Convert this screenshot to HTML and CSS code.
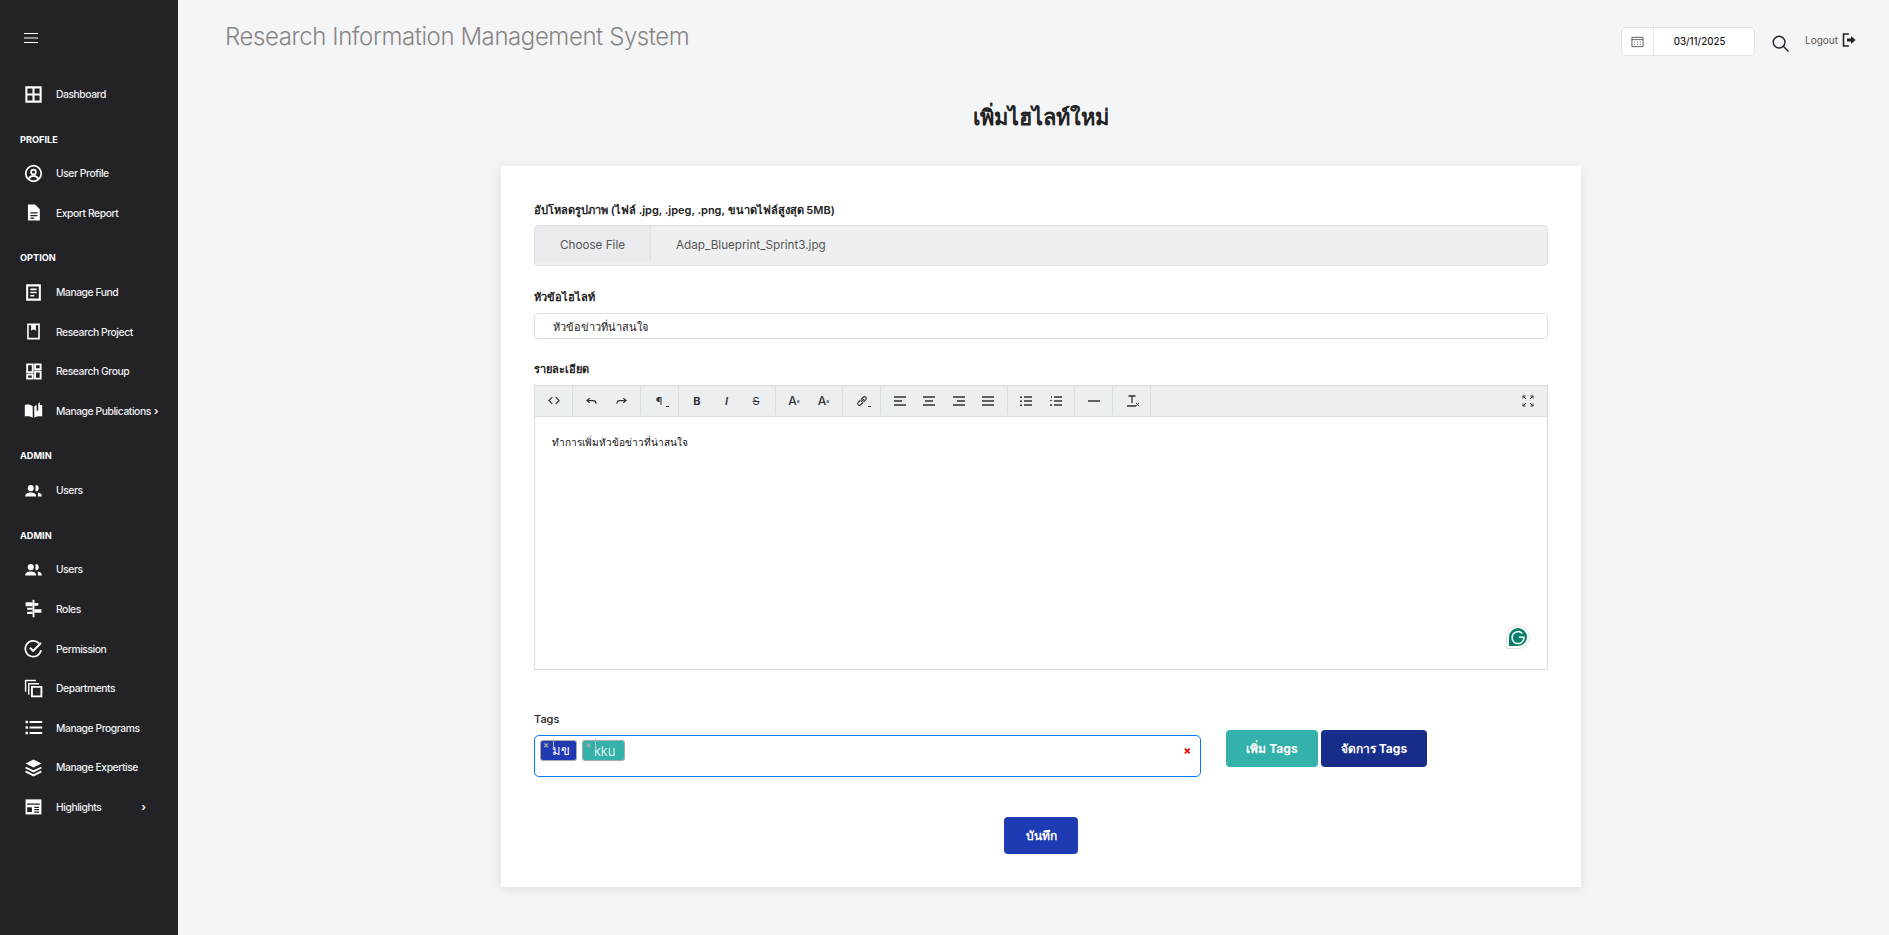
FILE: index.html
```html
<!DOCTYPE html>
<html lang="en">
<head>
    <meta charset="UTF-8">
    <meta name="viewport" content="width=device-width, initial-scale=1.0">
    <title>Research Information Management System</title>
    <link rel="stylesheet" href="styles.css">
</head>
<body>
    <aside class="sidebar">
        <div class="side-top">
            <svg class="burger" viewBox="0 0 14 12" width="14" height="12"><path d="M0 1.500h14M0 6h14M0 10.500h14" stroke="#fff" stroke-width="1.200"/></svg>
        </div>
        <a class="nav-item"><svg class="nav-icon" viewBox="0 0 24 24"><path d="M3 3h18v18H3zM12 3v18M3 12h18" fill="none" stroke="#fff" stroke-width="2.600"/></svg>Dashboard</a>
        <div class="nav-label">PROFILE</div>
        <a class="nav-item"><svg class="nav-icon" viewBox="0 0 24 24"><g fill="none" stroke="#fff" stroke-width="2.200"><circle cx="12" cy="12" r="9.800"/><circle cx="12" cy="10" r="3"/><path d="M6 19c1-3 3.500-4 6-4s5 1 6 4"/></g></svg>User Profile</a>
        <a class="nav-item"><svg class="nav-icon" viewBox="0 0 24 24"><path d="M5 2h9l6 6v14H5z" fill="#fff"/><path d="M8 12.500h9M8 16h9M8 19h5" stroke="#222227" stroke-width="1.600"/></svg>Export Report</a>
        <div class="nav-label">OPTION</div>
        <a class="nav-item"><svg class="nav-icon" viewBox="0 0 24 24"><path d="M4 3h16v18H4z" fill="none" stroke="#fff" stroke-width="2.600"/><path d="M8 8h8M8 12h8M8 16h5" stroke="#fff" stroke-width="2"/></svg>Manage Fund</a>
        <a class="nav-item"><svg class="nav-icon" viewBox="0 0 24 24"><path d="M5 3h14v18H5z" fill="none" stroke="#fff" stroke-width="2"/><path d="M9 3h6v8l-3-2-3 2z" fill="#fff"/></svg>Research Project</a>
        <a class="nav-item"><svg class="nav-icon" viewBox="0 0 24 24"><path d="M4 3h7v10H4zM14 3h7v6h-7zM4 16h7v5H4zM14 12h7v9h-7z" fill="none" stroke="#fff" stroke-width="2.400"/></svg>Research Group</a>
        <a class="nav-item"><svg class="nav-icon" viewBox="0 0 24 24"><path d="M1 5c4-1 7-.5 10 1.500V21c-3-1.500-6-2-10-1.500zM13 6.500c1-.7 2-1.200 3-1.500v8l2-1.500 0-8.500 2-1.500V5l3 0v14.500c-4-.5-7 0-10 1.500z" fill="#fff"/></svg>Manage Publications<span class="chev near">›</span></a>
        <div class="nav-label">ADMIN</div>
        <a class="nav-item"><svg class="nav-icon" viewBox="0 0 24 24"><use href="#ico-users"/></svg>Users</a>
        <div class="nav-label">ADMIN</div>
        <a class="nav-item"><svg class="nav-icon" viewBox="0 0 24 24"><use href="#ico-users"/></svg>Users</a>
        <a class="nav-item"><svg class="nav-icon" viewBox="0 0 24 24"><path d="M12 1v22" stroke="#fff" stroke-width="2.400"/><path d="M2 4h9v5H2zM4 11h7v2.500H4zM13 5h5v3.500h-5zM13 13h9v4.500h-9zM4 16h7v3H4z" fill="#fff"/></svg>Roles</a>
        <a class="nav-item"><svg class="nav-icon" viewBox="0 0 24 24"><path d="M19 5.500A10 10 0 1 0 21.500 14" fill="none" stroke="#fff" stroke-width="2.200"/><path d="M7.500 11l4 4 10-10" fill="none" stroke="#fff" stroke-width="2.400"/></svg>Permission</a>
        <a class="nav-item"><svg class="nav-icon" viewBox="0 0 24 24"><path d="M2 16V2h13M6 20V6h13" fill="none" stroke="#fff" stroke-width="1.800"/><path d="M10 10h12v12H10z" fill="none" stroke="#fff" stroke-width="2.400"/></svg>Departments</a>
        <a class="nav-item"><svg class="nav-icon" viewBox="0 0 24 24"><path d="M7 5h16M7 12h16M7 19h16" stroke="#fff" stroke-width="2.400"/><path d="M2 3.500h3v3H2zM2 10.500h3v3H2zM2 17.500h3v3H2z" fill="#fff"/></svg>Manage Programs</a>
        <a class="nav-item"><svg class="nav-icon" viewBox="0 0 24 24"><path d="M12 2l10 5-10 5L2 7z" fill="#fff"/><path d="M2 12l10 5 10-5M2 17l10 5 10-5" fill="none" stroke="#fff" stroke-width="2.400"/></svg>Manage Expertise</a>
        <a class="nav-item"><svg class="nav-icon" viewBox="0 0 24 24"><path d="M2 3h20v19H2z" fill="#fff"/><path d="M4 9h16M13 13h6M13 16h6M13 19h6" stroke="#222227" stroke-width="1.500"/><path d="M4 13h6v6H4z" fill="#222227"/></svg>Highlights<span class="chev far">›</span></a>
    </aside>

    <svg class="defs" width="0" height="0"><symbol id="ico-users" viewBox="0 0 24 24"><circle cx="8.500" cy="9" r="3.800" fill="#fff"/><path d="M14.500 5a3.800 3.800 0 0 1 0 8z" fill="#fff"/><path d="M1.500 19.500c0-3.500 3-5 7-5s7 1.500 7 5z" fill="#fff"/><path d="M17.500 14.500c3 .3 5 2 5 5h-5z" fill="#fff"/></symbol></svg>

    <main class="content">
        <header class="topbar">
            <div class="app-title">Research Information Management System</div>
            <div class="top-tools">
                <div class="date-box">
                    <span class="date-ico"><svg viewBox="0 0 14 14" width="13" height="13"><path d="M1 2.500h12v10H1zM1 5h12" fill="none" stroke="#555" stroke-width="1"/><path d="M3.500 7h1v1h-1zM6.500 7h1v1h-1zM9.500 7h1v1h-1zM3.500 9.500h1v1h-1zM6.500 9.500h1v1h-1zM9.500 9.500h1v1h-1z" fill="#555"/></svg></span>
                    <span class="date-val">03/11/2025</span>
                </div>
                <svg class="search-ico" viewBox="0 0 18 18" width="17" height="17"><circle cx="7.500" cy="7.500" r="6.200" fill="none" stroke="#1b2430" stroke-width="1.500"/><path d="M12 12l5.500 5.500" stroke="#1b2430" stroke-width="1.500"/></svg>
                <a class="logout">Logout
                    <svg viewBox="0 0 14 14" width="14" height="14"><path d="M7 1H1.500v12H7" fill="none" stroke="#222" stroke-width="1.600"/><path d="M5 5.500h4V3l4.500 4L9 11V8.500H5z" fill="#222"/></svg>
                </a>
            </div>
        </header>

        <h1 class="page-title">เพิ่มไฮไลท์ใหม่</h1>

        <form class="card">
            <label class="field-label">อัปโหลดรูปภาพ (ไฟล์ .jpg, .jpeg, .png, ขนาดไฟล์สูงสุด 5MB)</label>
            <div class="file-input">
                <span class="file-btn">Choose File</span>
                <span class="file-name">Adap_Blueprint_Sprint3.jpg</span>
            </div>

            <label class="field-label">หัวข้อไฮไลท์</label>
            <input class="text-input" type="text" value="หัวข้อข่าวที่น่าสนใจ">

            <label class="field-label">รายละเอียด</label>
            <div class="editor">
                <div class="toolbar">
                    <div class="tool-group">
                        <span class="tool"><svg viewBox="0 0 14 10" width="12" height="9"><path d="M5 1L1 5l4 4M9 1l4 4-4 4" class="ln"/></svg></span>
                    </div>
                    <div class="tool-group">
                        <span class="tool"><svg viewBox="0 0 12 8" width="11" height="8"><path d="M4 1L1 3.500 4 6M1 3.500h7c2 0 3 1 3 3.500" class="ln"/></svg></span>
                        <span class="tool"><svg viewBox="0 0 12 8" width="11" height="8"><path d="M8 1l3 2.500L8 6M11 3.500H4c-2 0-3 1-3 3.500" class="ln"/></svg></span>
                    </div>
                    <div class="tool-group">
                        <span class="tool">¶<i class="caret"></i></span>
                    </div>
                    <div class="tool-group">
                        <span class="tool bold">B</span>
                        <span class="tool ital">I</span>
                        <span class="tool strike">S</span>
                    </div>
                    <div class="tool-group">
                        <span class="tool big">A<sup>a</sup></span>
                        <span class="tool big">A<sub>a</sub></span>
                    </div>
                    <div class="tool-group">
                        <span class="tool"><svg viewBox="0 0 12 12" width="12" height="12"><path d="M5 7l3-3M4.500 5L2 7.500a1.800 1.800 0 0 0 2.500 2.500L7 7.500M5 4.500L7.500 2A1.800 1.800 0 0 1 10 4.500L7.500 7" fill="none" stroke="#333" stroke-width="1.100"/></svg><i class="caret"></i></span>
                    </div>
                    <div class="tool-group">
                        <span class="tool"><svg viewBox="0 0 12 10" width="12" height="10"><path d="M0 1h12M0 5h8M0 9h12" class="ln"/></svg></span>
                        <span class="tool"><svg viewBox="0 0 12 10" width="12" height="10"><path d="M0 1h12M2 5h8M0 9h12" class="ln"/></svg></span>
                        <span class="tool"><svg viewBox="0 0 12 10" width="12" height="10"><path d="M0 1h12M4 5h8M0 9h12" class="ln"/></svg></span>
                        <span class="tool"><svg viewBox="0 0 12 10" width="12" height="10"><path d="M0 1h12M0 5h12M0 9h12" class="ln"/></svg></span>
                    </div>
                    <div class="tool-group">
                        <span class="tool"><svg viewBox="0 0 12 10" width="12" height="10"><path d="M4 1h8M4 5h8M4 9h8" class="ln"/><path d="M0 .5h2v1.500H0zM0 4.500h2v1.500H0zM0 8.500h2v1.500H0z" fill="#333"/></svg></span>
                        <span class="tool"><svg viewBox="0 0 12 10" width="12" height="10"><path d="M4 1h8M4 5h8M4 9h8" class="ln"/><path d="M1 0h1v2H1zM0 4h2v1H0zM0 8h2v2H0z" fill="#555"/></svg></span>
                    </div>
                    <div class="tool-group">
                        <span class="tool"><svg viewBox="0 0 12 4" width="12" height="4"><path d="M0 2h12" stroke="#333" stroke-width="1.500"/></svg></span>
                    </div>
                    <div class="tool-group">
                        <span class="tool tx"><svg viewBox="0 0 12 12" width="12" height="12"><path d="M1.500 1h7M5 1v7M0 11h9" class="ln"/><path d="M9 8l3 3M12 8l-3 3" stroke="#333" stroke-width="1"/></svg></span>
                    </div>
                    <span class="tool full"><svg viewBox="0 0 12 12" width="12" height="12"><path d="M1 1l3 3M11 1L8 4M1 11l3-3M11 11L8 8M1 1h2.500M1 1v2.500M11 1H8.500M11 1v2.500M1 11h2.500M1 11V8.500M11 11H8.500M11 11V8.500" stroke="#333" stroke-width="1" fill="none"/></svg></span>
                </div>
                <div class="editor-body">
                    <p>ทำการเพิ่มหัวข้อข่าวที่น่าสนใจ</p>
                    <span class="grammarly"><svg viewBox="0 0 24 24" width="24" height="24"><path d="M12 .5A11.500 11.500 0 1 1 12 23.500H.5V12A11.500 11.500 0 0 1 12 .5z" fill="#fff" stroke="#dfe3e6"/><path d="M12 3a9 9 0 1 1 0 18H3v-9a9 9 0 0 1 9-9z" fill="#0b7f6c"/><path d="M16.300 8.400A6 6 0 1 0 18 12.300h-5" fill="none" stroke="#fff" stroke-width="1.500"/></svg></span>
                </div>
            </div>

            <label class="field-label tags-label">Tags</label>
            <div class="tags-row">
                <div class="tag-box">
                    <span class="chip chip-blue"><i class="chip-x">×</i>มข</span>
                    <span class="chip chip-teal"><i class="chip-x">×</i>kku</span>
                    <span class="tag-clear">×</span>
                </div>
                <div class="tag-actions">
                    <button type="button" class="btn btn-teal">เพิ่ม Tags</button>
                    <button type="button" class="btn btn-navy">จัดการ Tags</button>
                </div>
            </div>

            <div class="form-foot">
                <button type="button" class="btn btn-save">บันทึก</button>
            </div>
        </form>
    </main>
</body>
</html>
```

FILE: styles.css
```css
* {
    box-sizing: border-box;
}

body {
    font-family: Inter, "Noto Sans", "Noto Sans CJK SC", sans-serif;
    background-color: #f4f5f7;
    margin: 0;
    padding: 0;
    display: flex;
    height: 935px;
    overflow: hidden;
    color: #222;
}

.defs {
    position: absolute;
}

/* sidebar */
.sidebar {
    width: 178px;
    flex-shrink: 0;
    height: 935px;
    background-color: #222227;
    color: #fff;
}

.side-top {
    height: 74.4px;
    padding: 32px 0 0 24px;
}

.burger {
    display: block;
}

.nav-item {
    height: 39.6px;
    display: flex;
    align-items: center;
    padding-left: 24px;
    font-size: 10.3px;
    font-weight: 500;
    letter-spacing: -0.42px;
    color: #f0f0f2;
}

.nav-icon {
    width: 19px;
    height: 19px;
    margin-right: 13px;
    flex-shrink: 0;
}

.nav-label {
    height: 39.6px;
    display: flex;
    align-items: flex-end;
    padding: 0 0 9px 20px;
    font-size: 9.2px;
    font-weight: 700;
    color: #fff;
}

.chev {
    font-size: 11px;
    font-weight: 700;
}

.chev.near {
    margin-left: 3px;
}

.chev.far {
    margin-left: 40px;
}

/* main */
.content {
    flex: 1;
    min-width: 0;
}

.topbar {
    height: 94px;
    display: flex;
    justify-content: space-between;
    align-items: flex-start;
    padding: 22px 33px 0 47px;
}

.app-title {
    font-size: 24px;
    font-weight: 300;
    color: #8a8585;
    letter-spacing: -0.42px;
}

.top-tools {
    display: flex;
    align-items: flex-start;
    padding-top: 5px;
}

.date-box {
    width: 134px;
    height: 29px;
    display: flex;
    align-items: center;
    background-color: #fff;
    border: 1px solid #e2e3e6;
    border-radius: 5px;
}

.date-ico {
    width: 32px;
    height: 100%;
    display: flex;
    align-items: center;
    justify-content: center;
    border-right: 1px solid #e2e3e6;
}

.date-val {
    flex: 1;
    padding-right: 9px;
    text-align: center;
    font-size: 9.7px;
    font-weight: 500;
    color: #1d1d1d;
}

.search-ico {
    margin: 8px 0 0 17px;
}

.logout {
    display: flex;
    align-items: center;
    margin: 6px 0 0 16px;
    font-size: 10px;
    color: #555;
    gap: 4px;
}

.page-title {
    margin: 0 0 35px 323px;
    width: 1080px;
    height: 37px;
    line-height: 46px;
    text-align: center;
    font-size: 21.8px;
    font-weight: 700;
    color: #222;
}

.card {
    margin-left: 323px;
    width: 1080px;
    height: 721px;
    padding: 33px 33px 0;
    background-color: #fff;
    box-shadow: 0 2px 10px rgba(0, 0, 0, 0.1);
}

.field-label {
    display: block;
    height: 20px;
    line-height: 22px;
    font-size: 11px;
    font-weight: 600;
    color: #222;
}

.file-input {
    height: 41px;
    margin: 6px 0 20px;
    display: flex;
    align-items: stretch;
    background-color: #eeeff1;
    border: 1px solid #dee1e4;
    border-radius: 4px;
    font-size: 11.7px;
    color: #555;
    line-height: 38px;
    overflow: hidden;
}

.file-btn {
    width: 116px;
    margin-bottom: 4px;
    text-align: center;
    background-color: #e9ebee;
    border-right: 1px solid #dee1e4;
}

.file-name {
    padding-left: 25px;
}

.text-input {
    display: block;
    width: 100%;
    height: 26px;
    margin: 7px 0 19px;
    padding: 2px 18px 0;
    border: 1px solid #dee1e4;
    border-radius: 4px;
    font: 11px Inter, "Noto Sans", sans-serif;
    color: #222;
    background-color: #fff;
}

/* editor */
.editor {
    margin-top: 7px;
    height: 285px;
    border: 1px solid #d9dcde;
}

.toolbar {
    height: 31px;
    display: flex;
    align-items: stretch;
    background-color: #ebeff0;
    border-bottom: 1px solid #d9dedf;
    padding-bottom: 1px;
}

.tool-group {
    display: flex;
    padding: 0 3.75px;
    border-right: 1px solid #d9dedf;
}

.tool {
    position: relative;
    width: 29.5px;
    display: flex;
    align-items: center;
    justify-content: center;
    font-size: 11px;
    color: #333;
}

.tool.tx {
    padding-left: 3px;
}

.tool.big {
    font-size: 12px;
    font-weight: 500;
}

.tool.bold {
    font-weight: 700;
}

.tool.ital {
    font-style: italic;
    font-weight: 600;
}

.tool.strike {
    text-decoration: line-through;
}

.tool sup,
.tool sub {
    font-size: 5px;
}

.tool.full {
    margin-left: auto;
    margin-right: 4px;
}

.caret {
    position: absolute;
    right: 5px;
    bottom: 8px;
    width: 3px;
    height: 1px;
    background-color: #333;
}

.ln {
    fill: none;
    stroke: #333;
    stroke-width: 1.3;
}

.editor-body {
    position: relative;
    height: 252px;
    padding: 17px 17px;
    font-size: 10.1px;
    color: #111;
}

.editor-body p {
    margin: 0;
}

.grammarly {
    position: absolute;
    right: 17px;
    bottom: 20px;
    height: 24px;
}

/* tags */
.tags-label {
    margin-top: 38px;
    font-weight: 500;
}

.tags-row {
    display: flex;
    align-items: flex-start;
    margin-top: 7px;
}

.tag-box {
    position: relative;
    width: 667px;
    height: 42px;
    padding: 4px 5px;
    display: flex;
    align-items: flex-start;
    gap: 5px;
    border: 1px solid #007bff;
    border-radius: 5px;
}

.chip {
    position: relative;
    height: 21px;
    padding-left: 11px;
    display: flex;
    align-items: center;
    font-size: 13px;
    font-weight: 300;
    color: #fff;
    border: 1px solid #aaa;
    border-radius: 3px;
}

.chip-blue {
    width: 37px;
    background-color: #1f3ab3;
}

.chip-teal {
    width: 43px;
    background-color: #34b1aa;
}

/* the x and its divider sit over the chip's corner */
.chip-x {
    position: absolute;
    left: 2px;
    top: -2px;
    width: 11px;
    height: 11px;
    font-size: 9px;
    line-height: 12px;
    font-style: normal;
    font-weight: 700;
    color: #aaa;
    border-right: 1px solid #bbb;
}

.tag-clear {
    position: absolute;
    right: 9px;
    top: 6px;
    font-size: 11px;
    font-weight: 800;
    line-height: 16px;
    color: #e60000;
}

.tag-actions {
    display: flex;
    gap: 3px;
    margin: -5px 0 0 25px;
}

.btn {
    height: 37px;
    border: none;
    border-radius: 4px;
    font-family: Inter, "Noto Sans", sans-serif;
    font-size: 12px;
    font-weight: 700;
    color: #fff;
    padding: 0;
}

.btn-teal {
    width: 92px;
    background-color: #34b1aa;
}

.btn-navy {
    width: 106px;
    background-color: #182d8a;
}

.form-foot {
    margin-top: 40px;
    display: flex;
    justify-content: center;
}

.btn-save {
    width: 74px;
    background-color: #1f3bb3;
}
```
